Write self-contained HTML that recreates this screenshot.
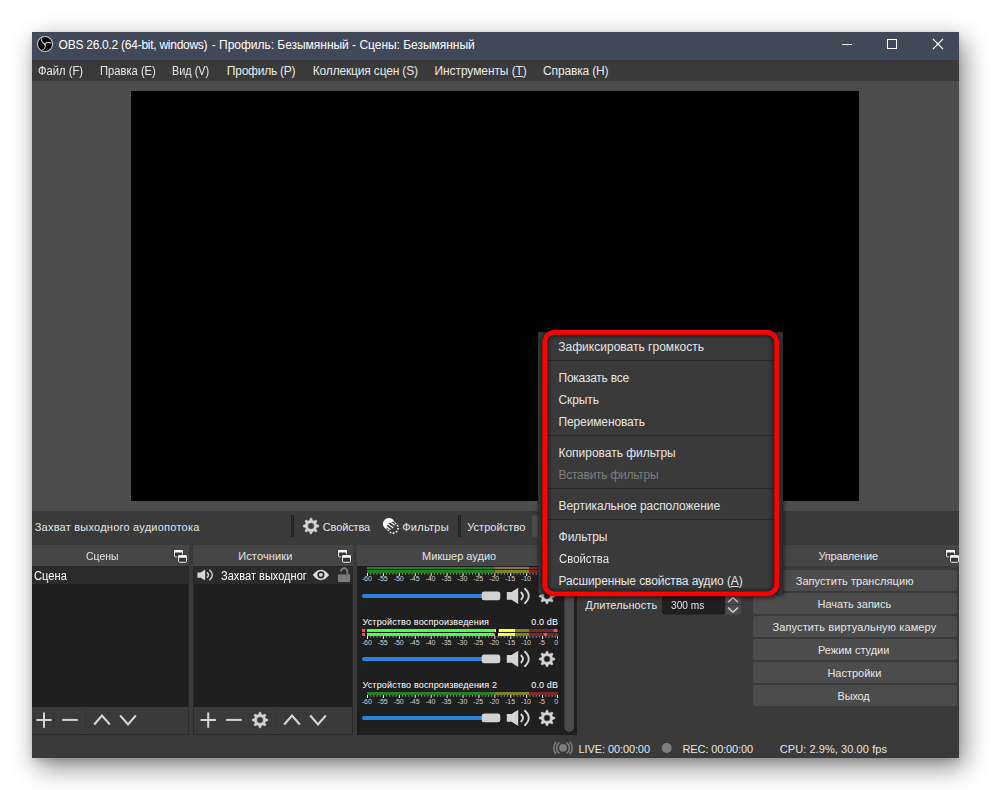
<!DOCTYPE html>
<html lang="ru"><head><meta charset="utf-8"><title>OBS</title>
<style>
html,body{margin:0;padding:0;background:#fff;}
body{width:991px;height:790px;position:relative;overflow:hidden;font-family:"Liberation Sans",sans-serif;}
.abs,.t,#win div,#win svg{position:absolute;}
.t{white-space:nowrap;line-height:normal;z-index:50;transform-origin:0 0;display:block;}
#win{position:absolute;left:32px;top:32px;width:927px;height:726px;background:#3a3a3a;box-shadow:5px 9px 24px rgba(0,0,0,.47),0 3px 6px rgba(0,0,0,.12);}
/* coordinates inside #win are page coords minus 32 */
#titlebar{left:0;top:0;width:927px;height:28px;background:#414858;}
#menubar{left:0;top:28px;width:927px;height:21px;background:#3a3a3a;}
#central{left:0;top:49px;width:927px;height:430px;background:#4c4c4c;}
#preview{left:99px;top:59px;width:728px;height:410px;background:#000;}
.dtitle{background:#464646;height:21px;top:513px;}
.list{background:#1f1f1f;top:535px;height:140px;}
.row{background:#2b2b2b;height:17px;left:0;top:0;}
.tbar{background:#3a3a3a;top:675px;height:28px;border-bottom:1px solid #2c2c2c;border-right:1px solid #2c2c2c;box-sizing:border-box;}
.btn{background:#4c4c4c;border-radius:3px;left:721px;width:204px;height:21px;}
#menu{left:538px;top:332px;width:245px;height:262px;background:#3a3a3a;z-index:60;box-shadow:1px 1px 4px rgba(0,0,0,.55);border:1px solid #303030;box-sizing:border-box;}
#menu .sep{position:absolute;left:5px;width:231px;height:1px;background:#2a2a2a;}
#hl{left:0;top:0;z-index:65;pointer-events:none;}
.lb{top:534px;height:141px;background:#262626;}

</style></head>
<body>
<div id="win">
  <div id="titlebar"></div>
  <div id="menubar"></div>
  <div id="central"></div>
  <div id="preview"></div>

  <!-- docks -->
  <div class="dtitle" style="left:0;width:157px"></div>
  <div class="lb" style="left:0;width:157px"></div>
  <div class="list" style="left:0;width:156px"><div class="row" style="width:156px"></div></div>
  <div class="tbar" style="left:0;width:157px"></div>

  <div class="dtitle" style="left:161px;width:160px"></div>
  <div class="lb" style="left:161px;width:160px"></div>
  <div class="list" style="left:162px;width:158px"><div class="row" style="width:158px"></div></div>
  <div class="tbar" style="left:161px;width:160px;border-left:1px solid #2c2c2c"></div>

  <div class="dtitle" style="left:325px;width:220px"></div>
  <div id="mixer" style="left:325px;top:534px;width:220px;height:169px;background:#1f1f1f"></div>

  <div class="dtitle" style="left:549px;width:168px"></div>
  <div class="dtitle" style="left:721px;width:206px"></div>

  <div class="btn" style="top:538px"></div>
  <div class="btn" style="top:561px"></div>
  <div class="btn" style="top:584px"></div>
  <div class="btn" style="top:607px"></div>
  <div class="btn" style="top:630px"></div>
  <div class="btn" style="top:653px"></div>
</div>
<span id="t0" class="t" style="left:58.60px;top:37.94px;font-size:12px;color:#ffffff;letter-spacing:-0.262px;">OBS 26.0.2 (64-bit, windows)</span>
<span id="t1" class="t" style="left:211.80px;top:37.94px;font-size:12px;color:#ffffff;letter-spacing:-0.026px;">- Профиль: Безымянный - Сцены: Безымянный</span>
<span id="t2" class="t" style="left:37.60px;top:63.94px;font-size:12px;color:#e8e8e8;transform:scaleX(0.9342);">Файл (F)</span>
<span id="t3" class="t" style="left:99.60px;top:63.94px;font-size:12px;color:#e8e8e8;transform:scaleX(0.9319);">Правка (E)</span>
<span id="t4" class="t" style="left:172.30px;top:63.94px;font-size:12px;color:#e8e8e8;transform:scaleX(0.9038);">Вид (V)</span>
<span id="t5" class="t" style="left:226.80px;top:63.94px;font-size:12px;color:#e8e8e8;letter-spacing:-0.234px;">Профиль (P)</span>
<span id="t6" class="t" style="left:312.80px;top:63.94px;font-size:12px;color:#e8e8e8;letter-spacing:-0.171px;">Коллекция сцен (S)</span>
<span id="t7" class="t" style="left:434.50px;top:63.94px;font-size:12px;color:#e8e8e8;letter-spacing:-0.086px;">Инструменты (<u>T</u>)</span>
<span id="t8" class="t" style="left:543.10px;top:63.94px;font-size:12px;color:#e8e8e8;letter-spacing:-0.158px;">Справка (H)</span>
<span id="t9" class="t" style="left:34.70px;top:521.25px;font-size:11px;color:#e4e4e4;letter-spacing:0.231px;">Захват выходного аудиопотока</span>
<span id="t10" class="t" style="left:322.80px;top:521.14px;font-size:11px;color:#e4e4e4;letter-spacing:-0.145px;">Свойства</span>
<span id="t11" class="t" style="left:402.20px;top:521.14px;font-size:11px;color:#e4e4e4;letter-spacing:0.257px;">Фильтры</span>
<span id="t12" class="t" style="left:467.20px;top:521.14px;font-size:11px;color:#e4e4e4;letter-spacing:0.061px;">Устройство</span>
<span id="t13" class="t" style="left:85.60px;top:549.75px;font-size:11px;color:#e4e4e4;transform:scaleX(0.9493);">Сцены</span>
<span id="t14" class="t" style="left:238.20px;top:549.75px;font-size:11px;color:#e4e4e4;letter-spacing:0.124px;">Источники</span>
<span id="t15" class="t" style="left:422.10px;top:549.75px;font-size:11px;color:#e4e4e4;letter-spacing:0.005px;">Микшер аудио</span>
<span id="t16" class="t" style="left:818.50px;top:549.75px;font-size:11px;color:#e4e4e4;letter-spacing:-0.184px;">Управление</span>
<span id="t17" class="t" style="left:33.60px;top:568.64px;font-size:12px;color:#ffffff;transform:scaleX(0.9296);">Сцена</span>
<span id="t18" class="t" style="left:221.00px;top:568.64px;font-size:12px;color:#ffffff;transform:scaleX(0.9190);">Захват выходног</span>
<span id="t19" class="t" style="left:362.40px;top:616.65px;font-size:9px;color:#ffffff;letter-spacing:0.167px;">Устройство воспроизведения</span>
<span id="t20" class="t" style="left:531.30px;top:616.65px;font-size:9px;color:#ffffff;letter-spacing:0.134px;">0.0 dB</span>
<span id="t21" class="t" style="left:362.40px;top:679.65px;font-size:9px;color:#ffffff;letter-spacing:0.173px;">Устройство воспроизведения 2</span>
<span id="t22" class="t" style="left:531.30px;top:679.65px;font-size:9px;color:#ffffff;letter-spacing:0.134px;">0.0 dB</span>
<span id="t23" class="t" style="left:585.20px;top:599.34px;font-size:11px;color:#e4e4e4;letter-spacing:0.064px;">Длительность</span>
<span id="t24" class="t" style="left:671.10px;top:598.84px;font-size:11px;color:#e4e4e4;transform:scaleX(0.9230);">300 ms</span>
<span id="t25" class="t" style="left:795.70px;top:574.84px;font-size:11px;color:#e4e4e4;letter-spacing:0.062px;">Запустить трансляцию</span>
<span id="t26" class="t" style="left:817.50px;top:597.84px;font-size:11px;color:#e4e4e4;letter-spacing:-0.004px;">Начать запись</span>
<span id="t27" class="t" style="left:772.50px;top:620.84px;font-size:11px;color:#e4e4e4;letter-spacing:0.119px;">Запустить виртуальную камеру</span>
<span id="t28" class="t" style="left:818.00px;top:643.84px;font-size:11px;color:#e4e4e4;letter-spacing:-0.008px;">Режим студии</span>
<span id="t29" class="t" style="left:827.40px;top:666.84px;font-size:11px;color:#e4e4e4;letter-spacing:-0.005px;">Настройки</span>
<span id="t30" class="t" style="left:837.50px;top:689.84px;font-size:11px;color:#e4e4e4;letter-spacing:-0.180px;">Выход</span>
<span id="t31" class="t" style="left:578.60px;top:742.64px;font-size:11px;color:#e4e4e4;letter-spacing:-0.106px;">LIVE: 00:00:00</span>
<span id="t32" class="t" style="left:682.40px;top:742.64px;font-size:11px;color:#e4e4e4;letter-spacing:-0.113px;">REC: 00:00:00</span>
<span id="t33" class="t" style="left:779.70px;top:742.64px;font-size:11px;color:#e4e4e4;letter-spacing:0.080px;">CPU: 2.9%, 30.00 fps</span>
<span id="t34" class="t" style="left:558.30px;top:340.14px;font-size:12px;color:#e4e4e4;letter-spacing:0.011px;z-index:70;">Зафиксировать громкость</span>
<span id="t35" class="t" style="left:558.50px;top:371.14px;font-size:12px;color:#e4e4e4;letter-spacing:-0.242px;z-index:70;">Показать все</span>
<span id="t36" class="t" style="left:558.50px;top:393.14px;font-size:12px;color:#e4e4e4;letter-spacing:-0.094px;z-index:70;">Скрыть</span>
<span id="t37" class="t" style="left:558.50px;top:415.14px;font-size:12px;color:#e4e4e4;letter-spacing:-0.124px;z-index:70;">Переименовать</span>
<span id="t38" class="t" style="left:558.50px;top:446.14px;font-size:12px;color:#e4e4e4;letter-spacing:-0.026px;z-index:70;">Копировать фильтры</span>
<span id="t39" class="t" style="left:558.50px;top:468.14px;font-size:12px;color:#7e7e7e;letter-spacing:-0.253px;z-index:70;">Вставить фильтры</span>
<span id="t40" class="t" style="left:558.50px;top:499.14px;font-size:12px;color:#e4e4e4;letter-spacing:-0.045px;z-index:70;">Вертикальное расположение</span>
<span id="t41" class="t" style="left:558.50px;top:530.14px;font-size:12px;color:#e4e4e4;letter-spacing:0.010px;z-index:70;">Фильтры</span>
<span id="t42" class="t" style="left:558.50px;top:552.14px;font-size:12px;color:#e4e4e4;transform:scaleX(0.9487);z-index:70;">Свойства</span>
<span id="t43" class="t" style="left:558.50px;top:574.14px;font-size:12px;color:#e4e4e4;letter-spacing:-0.099px;z-index:70;">Расширенные свойства аудио (<u>A</u>)</span>
<svg id="ic" width="991" height="790" viewBox="0 0 991 790" style="position:absolute;left:0;top:0;z-index:40">
<style>.sc{font-family:"Liberation Sans",sans-serif;font-size:7px;fill:#d0d0d0;letter-spacing:-0.1px}</style>
<circle cx="45" cy="44" r="7.55" fill="#000" stroke="#cfcfcf" stroke-width="1.05"/>
<path d="M41.3 39.3 Q41.4 42.3 44.9 44.3 M45.1 44.4 Q46.8 40.9 51.0 43.3 M45.0 44.5 Q46.1 48.2 42.6 49.9" stroke="#c4c4c4" stroke-width="1.05" fill="none" stroke-linecap="round"/>
<circle cx="45" cy="44.3" r="0.9" fill="#d8d8d8"/>
<path d="M842 44.5 h10" stroke="#fff" stroke-width="1"/>
<rect x="887.5" y="39.5" width="9" height="9" fill="none" stroke="#fff" stroke-width="1"/>
<path d="M933 39 l10 10 M943 39 l-10 10" stroke="#fff" stroke-width="1.1"/>
<rect x="291.5" y="515.5" width="2" height="21" fill="#303030" stroke="#1f1f1f" stroke-width="1"/>
<rect x="458.5" y="515.5" width="2" height="21" fill="#303030" stroke="#1f1f1f" stroke-width="1"/>
<path d="M309.52 520.49 L310.31 518.13 L311.69 518.13 L312.48 520.49 L313.85 521.06 L316.08 519.95 L317.05 520.92 L315.94 523.15 L316.51 524.52 L318.87 525.31 L318.87 526.69 L316.51 527.48 L315.94 528.85 L317.05 531.08 L316.08 532.05 L313.85 530.94 L312.48 531.51 L311.69 533.87 L310.31 533.87 L309.52 531.51 L308.15 530.94 L305.92 532.05 L304.95 531.08 L306.06 528.85 L305.49 527.48 L303.13 526.69 L303.13 525.31 L305.49 524.52 L306.06 523.15 L304.95 520.92 L305.92 519.95 L308.15 521.06 Z M307.70 526.00 a3.30 3.30 0 1 0 6.60 0 a3.30 3.30 0 1 0 -6.60 0 Z" fill="#d4d4d4" fill-rule="evenodd" stroke="#d4d4d4" stroke-width="0.5" stroke-linejoin="round"/>
<defs><clipPath id="fc"><circle cx="388.8" cy="523.8" r="5.9"/></clipPath></defs>
<circle cx="392.9" cy="527.9" r="5.2" fill="none" stroke="#fff" stroke-width="1.6" stroke-dasharray="1.7 1.5"/>
<circle cx="388.8" cy="523.8" r="5.9" fill="#fff"/>
<g clip-path="url(#fc)"><circle cx="392.9" cy="527.9" r="6.2" fill="#3a3a3a"/><path d="M385 525.5 l8 6 M386.6 523 l8 6 M388.4 520.6 l8 6 M390.2 518.2 l8 6" stroke="#fff" stroke-width="1.1"/></g>
<rect x="532" y="515" width="60" height="22" rx="3" fill="#4c4c4c"/>
<rect x="174.00" y="549.90" width="9" height="7.5" fill="#343434" stroke="#383838" stroke-width="1.8" rx="1"/><rect x="174.50" y="550.40" width="8" height="6.5" fill="#363636" stroke="#ededed" stroke-width="1" rx="0.8"/><rect x="174.00" y="549.90" width="9" height="2.5" fill="#f6f6f6" rx="0.9"/><rect x="178.00" y="555.30" width="9" height="7.5" fill="#343434" stroke="#383838" stroke-width="1.8" rx="1"/><rect x="178.50" y="555.80" width="8" height="6.5" fill="#363636" stroke="#ededed" stroke-width="1" rx="0.8"/><rect x="178.00" y="555.30" width="9" height="2.5" fill="#f6f6f6" rx="0.9"/>
<rect x="338.00" y="549.90" width="9" height="7.5" fill="#343434" stroke="#383838" stroke-width="1.8" rx="1"/><rect x="338.50" y="550.40" width="8" height="6.5" fill="#363636" stroke="#ededed" stroke-width="1" rx="0.8"/><rect x="338.00" y="549.90" width="9" height="2.5" fill="#f6f6f6" rx="0.9"/><rect x="342.00" y="555.30" width="9" height="7.5" fill="#343434" stroke="#383838" stroke-width="1.8" rx="1"/><rect x="342.50" y="555.80" width="8" height="6.5" fill="#363636" stroke="#ededed" stroke-width="1" rx="0.8"/><rect x="342.00" y="555.30" width="9" height="2.5" fill="#f6f6f6" rx="0.9"/>
<defs><clipPath id="wc"><rect x="32" y="32" width="927" height="726"/></clipPath></defs><g clip-path="url(#wc)"><rect x="946.00" y="549.90" width="9" height="7.5" fill="#343434" stroke="#383838" stroke-width="1.8" rx="1"/><rect x="946.50" y="550.40" width="8" height="6.5" fill="#363636" stroke="#ededed" stroke-width="1" rx="0.8"/><rect x="946.00" y="549.90" width="9" height="2.5" fill="#f6f6f6" rx="0.9"/><rect x="950.00" y="555.30" width="9" height="7.5" fill="#343434" stroke="#383838" stroke-width="1.8" rx="1"/><rect x="950.50" y="555.80" width="8" height="6.5" fill="#363636" stroke="#ededed" stroke-width="1" rx="0.8"/><rect x="950.00" y="555.30" width="9" height="2.5" fill="#f6f6f6" rx="0.9"/></g>
<path d="M36.30 720.10 h15.40 M44.00 712.40 v15.40" stroke="#d4d4d4" stroke-width="2" fill="none"/>
<path d="M62.10 719.90 h15.60" stroke="#d4d4d4" stroke-width="2" fill="none"/>
<path d="M85.5 711 v18.5" stroke="#333" stroke-width="1"/>
<path d="M94.20 724.40 L102.00 715.60 L109.80 724.40" stroke="#d4d4d4" stroke-width="2.2" fill="none"/>
<path d="M120.20 715.60 L128.00 724.40 L135.80 715.60" stroke="#d4d4d4" stroke-width="2.2" fill="none"/>
<path d="M200.50 720.10 h15.40 M208.20 712.40 v15.40" stroke="#d4d4d4" stroke-width="2" fill="none"/>
<path d="M226.20 719.90 h15.60" stroke="#d4d4d4" stroke-width="2" fill="none"/>
<path d="M258.52 714.49 L259.31 712.13 L260.69 712.13 L261.48 714.49 L262.85 715.06 L265.08 713.95 L266.05 714.92 L264.94 717.15 L265.51 718.52 L267.87 719.31 L267.87 720.69 L265.51 721.48 L264.94 722.85 L266.05 725.08 L265.08 726.05 L262.85 724.94 L261.48 725.51 L260.69 727.87 L259.31 727.87 L258.52 725.51 L257.15 724.94 L254.92 726.05 L253.95 725.08 L255.06 722.85 L254.49 721.48 L252.13 720.69 L252.13 719.31 L254.49 718.52 L255.06 717.15 L253.95 714.92 L254.92 713.95 L257.15 715.06 Z M256.70 720.00 a3.30 3.30 0 1 0 6.60 0 a3.30 3.30 0 1 0 -6.60 0 Z" fill="#d4d4d4" fill-rule="evenodd" stroke="#d4d4d4" stroke-width="0.5" stroke-linejoin="round"/>
<path d="M275.5 711 v18.5" stroke="#333" stroke-width="1"/>
<path d="M284.20 724.40 L292.00 715.60 L299.80 724.40" stroke="#d4d4d4" stroke-width="2.2" fill="none"/>
<path d="M310.20 715.60 L318.00 724.40 L325.80 715.60" stroke="#d4d4d4" stroke-width="2.2" fill="none"/>
<path d="M197.40 572.42 L200.60 572.42 L205.15 569.50 L205.15 580.58 L200.60 577.66 L197.40 577.66 Z" fill="#d4d4d4"/><path d="M206.92 572.36 Q209.91 575.04 206.92 577.80" stroke="#d4d4d4" stroke-width="1.40" fill="none"/><path d="M209.37 569.84 Q215.22 575.04 209.37 580.31" stroke="#d4d4d4" stroke-width="1.40" fill="none"/>
<path d="M312.8 575 Q320.9 564.6 329.1 575 Q320.9 585.4 312.8 575 Z" fill="#dcdcdc"/>
<circle cx="320.9" cy="574.8" r="3.6" fill="#2b2b2b"/><circle cx="320.9" cy="574.8" r="1.9" fill="#dcdcdc"/>
<rect x="338" y="574.4" width="12" height="7.6" fill="#7c7c7c"/>
<path d="M341 571.6 v-0.2 a3.2 3.2 0 0 1 6.4 0 v3.4" stroke="#7c7c7c" stroke-width="1.9" fill="none"/>
<g clip-path="url(#mx)">
<defs><clipPath id="mx"><rect x="357" y="567" width="220" height="168"/></clipPath></defs>
<rect x="367" y="566" width="127.33" height="3" fill="#267f26"/><rect x="494.33" y="566" width="35.02" height="3" fill="#7f7f26"/><rect x="529.35" y="566" width="28.65" height="3" fill="#7f2626"/><rect x="367" y="570" width="127.33" height="3" fill="#267f26"/><rect x="494.33" y="570" width="35.02" height="3" fill="#7f7f26"/><rect x="529.35" y="570" width="28.65" height="3" fill="#7f2626"/><rect x="367.00" y="573" width="1" height="3" fill="#f0f0f0"/><rect x="370.18" y="573" width="1" height="1.8" fill="#8c8c8c"/><rect x="373.37" y="573" width="1" height="1.8" fill="#8c8c8c"/><rect x="376.55" y="573" width="1" height="1.8" fill="#8c8c8c"/><rect x="379.73" y="573" width="1" height="1.8" fill="#8c8c8c"/><rect x="382.92" y="573" width="1" height="3" fill="#f0f0f0"/><rect x="386.10" y="573" width="1" height="1.8" fill="#8c8c8c"/><rect x="389.28" y="573" width="1" height="1.8" fill="#8c8c8c"/><rect x="392.47" y="573" width="1" height="1.8" fill="#8c8c8c"/><rect x="395.65" y="573" width="1" height="1.8" fill="#8c8c8c"/><rect x="398.83" y="573" width="1" height="3" fill="#f0f0f0"/><rect x="402.02" y="573" width="1" height="1.8" fill="#8c8c8c"/><rect x="405.20" y="573" width="1" height="1.8" fill="#8c8c8c"/><rect x="408.38" y="573" width="1" height="1.8" fill="#8c8c8c"/><rect x="411.57" y="573" width="1" height="1.8" fill="#8c8c8c"/><rect x="414.75" y="573" width="1" height="3" fill="#f0f0f0"/><rect x="417.93" y="573" width="1" height="1.8" fill="#8c8c8c"/><rect x="421.12" y="573" width="1" height="1.8" fill="#8c8c8c"/><rect x="424.30" y="573" width="1" height="1.8" fill="#8c8c8c"/><rect x="427.48" y="573" width="1" height="1.8" fill="#8c8c8c"/><rect x="430.67" y="573" width="1" height="3" fill="#f0f0f0"/><rect x="433.85" y="573" width="1" height="1.8" fill="#8c8c8c"/><rect x="437.03" y="573" width="1" height="1.8" fill="#8c8c8c"/><rect x="440.22" y="573" width="1" height="1.8" fill="#8c8c8c"/><rect x="443.40" y="573" width="1" height="1.8" fill="#8c8c8c"/><rect x="446.58" y="573" width="1" height="3" fill="#f0f0f0"/><rect x="449.77" y="573" width="1" height="1.8" fill="#8c8c8c"/><rect x="452.95" y="573" width="1" height="1.8" fill="#8c8c8c"/><rect x="456.13" y="573" width="1" height="1.8" fill="#8c8c8c"/><rect x="459.32" y="573" width="1" height="1.8" fill="#8c8c8c"/><rect x="462.50" y="573" width="1" height="3" fill="#f0f0f0"/><rect x="465.68" y="573" width="1" height="1.8" fill="#8c8c8c"/><rect x="468.87" y="573" width="1" height="1.8" fill="#8c8c8c"/><rect x="472.05" y="573" width="1" height="1.8" fill="#8c8c8c"/><rect x="475.23" y="573" width="1" height="1.8" fill="#8c8c8c"/><rect x="478.42" y="573" width="1" height="3" fill="#f0f0f0"/><rect x="481.60" y="573" width="1" height="1.8" fill="#8c8c8c"/><rect x="484.78" y="573" width="1" height="1.8" fill="#8c8c8c"/><rect x="487.97" y="573" width="1" height="1.8" fill="#8c8c8c"/><rect x="491.15" y="573" width="1" height="1.8" fill="#8c8c8c"/><rect x="494.33" y="573" width="1" height="3" fill="#f0f0f0"/><rect x="497.52" y="573" width="1" height="1.8" fill="#8c8c8c"/><rect x="500.70" y="573" width="1" height="1.8" fill="#8c8c8c"/><rect x="503.88" y="573" width="1" height="1.8" fill="#8c8c8c"/><rect x="507.07" y="573" width="1" height="1.8" fill="#8c8c8c"/><rect x="510.25" y="573" width="1" height="3" fill="#f0f0f0"/><rect x="513.43" y="573" width="1" height="1.8" fill="#8c8c8c"/><rect x="516.62" y="573" width="1" height="1.8" fill="#8c8c8c"/><rect x="519.80" y="573" width="1" height="1.8" fill="#8c8c8c"/><rect x="522.98" y="573" width="1" height="1.8" fill="#8c8c8c"/><rect x="526.17" y="573" width="1" height="3" fill="#f0f0f0"/><rect x="529.35" y="573" width="1" height="1.8" fill="#8c8c8c"/><rect x="532.53" y="573" width="1" height="1.8" fill="#8c8c8c"/><rect x="535.72" y="573" width="1" height="1.8" fill="#8c8c8c"/><rect x="538.90" y="573" width="1" height="1.8" fill="#8c8c8c"/><rect x="542.08" y="573" width="1" height="3" fill="#f0f0f0"/><rect x="545.27" y="573" width="1" height="1.8" fill="#8c8c8c"/><rect x="548.45" y="573" width="1" height="1.8" fill="#8c8c8c"/><rect x="551.63" y="573" width="1" height="1.8" fill="#8c8c8c"/><rect x="554.82" y="573" width="1" height="1.8" fill="#8c8c8c"/><rect x="557.00" y="573" width="1" height="3" fill="#f0f0f0"/><text x="366.80" y="580.7" text-anchor="middle" class="sc">-60</text><text x="382.72" y="580.7" text-anchor="middle" class="sc">-55</text><text x="398.63" y="580.7" text-anchor="middle" class="sc">-50</text><text x="414.55" y="580.7" text-anchor="middle" class="sc">-45</text><text x="430.47" y="580.7" text-anchor="middle" class="sc">-40</text><text x="446.38" y="580.7" text-anchor="middle" class="sc">-35</text><text x="462.30" y="580.7" text-anchor="middle" class="sc">-30</text><text x="478.22" y="580.7" text-anchor="middle" class="sc">-25</text><text x="494.13" y="580.7" text-anchor="middle" class="sc">-20</text><text x="510.05" y="580.7" text-anchor="middle" class="sc">-15</text><text x="525.97" y="580.7" text-anchor="middle" class="sc">-10</text><text x="541.88" y="580.7" text-anchor="middle" class="sc">-5</text><text x="558" y="580.7" text-anchor="end" class="sc">0</text><rect x="362" y="594" width="124" height="4" rx="2" fill="#2a82da"/><rect x="481.7" y="591.6" width="18.6" height="8.6" rx="2.5" fill="#d2d2d2"/><path d="M506.80 592.10 L511.50 592.10 L518.20 587.80 L518.20 604.10 L511.50 599.80 L506.80 599.80 Z" fill="#d4d4d4"/><path d="M520.80 592.00 Q525.20 595.95 520.80 600.00" stroke="#d4d4d4" stroke-width="1.95" fill="none"/><path d="M524.40 588.30 Q533.00 595.95 524.40 603.70" stroke="#d4d4d4" stroke-width="1.95" fill="none"/><path d="M545.52 590.49 L546.31 588.13 L547.69 588.13 L548.48 590.49 L549.85 591.06 L552.08 589.95 L553.05 590.92 L551.94 593.15 L552.51 594.52 L554.87 595.31 L554.87 596.69 L552.51 597.48 L551.94 598.85 L553.05 601.08 L552.08 602.05 L549.85 600.94 L548.48 601.51 L547.69 603.87 L546.31 603.87 L545.52 601.51 L544.15 600.94 L541.92 602.05 L540.95 601.08 L542.06 598.85 L541.49 597.48 L539.13 596.69 L539.13 595.31 L541.49 594.52 L542.06 593.15 L540.95 590.92 L541.92 589.95 L544.15 591.06 Z M543.70 596.00 a3.30 3.30 0 1 0 6.60 0 a3.30 3.30 0 1 0 -6.60 0 Z" fill="#d4d4d4" fill-rule="evenodd" stroke="#d4d4d4" stroke-width="0.5" stroke-linejoin="round"/>
<rect x="362" y="629" width="3" height="3" fill="#ff4c4c"/><rect x="367" y="629" width="127.33" height="3" fill="#4cff4c"/><rect x="494.33" y="629" width="20.67" height="3" fill="#ffff4c"/><rect x="515" y="629" width="14.35" height="3" fill="#7f7f26"/><rect x="529.35" y="629" width="28.65" height="3" fill="#7f2626"/><rect x="496" y="629" width="2.7" height="3" fill="#000"/><rect x="553.6" y="629" width="3.6" height="3" fill="#ff4c4c"/><rect x="362" y="633" width="3" height="3" fill="#ff4c4c"/><rect x="367" y="633" width="127.33" height="3" fill="#4cff4c"/><rect x="494.33" y="633" width="20.67" height="3" fill="#ffff4c"/><rect x="515" y="633" width="14.35" height="3" fill="#7f7f26"/><rect x="529.35" y="633" width="28.65" height="3" fill="#7f2626"/><rect x="494.8" y="633" width="3" height="3" fill="#000"/><rect x="543.8" y="633" width="3.2" height="3" fill="#ff4c4c"/><rect x="367.00" y="636" width="1" height="3" fill="#f0f0f0"/><rect x="370.18" y="636" width="1" height="1.8" fill="#8c8c8c"/><rect x="373.37" y="636" width="1" height="1.8" fill="#8c8c8c"/><rect x="376.55" y="636" width="1" height="1.8" fill="#8c8c8c"/><rect x="379.73" y="636" width="1" height="1.8" fill="#8c8c8c"/><rect x="382.92" y="636" width="1" height="3" fill="#f0f0f0"/><rect x="386.10" y="636" width="1" height="1.8" fill="#8c8c8c"/><rect x="389.28" y="636" width="1" height="1.8" fill="#8c8c8c"/><rect x="392.47" y="636" width="1" height="1.8" fill="#8c8c8c"/><rect x="395.65" y="636" width="1" height="1.8" fill="#8c8c8c"/><rect x="398.83" y="636" width="1" height="3" fill="#f0f0f0"/><rect x="402.02" y="636" width="1" height="1.8" fill="#8c8c8c"/><rect x="405.20" y="636" width="1" height="1.8" fill="#8c8c8c"/><rect x="408.38" y="636" width="1" height="1.8" fill="#8c8c8c"/><rect x="411.57" y="636" width="1" height="1.8" fill="#8c8c8c"/><rect x="414.75" y="636" width="1" height="3" fill="#f0f0f0"/><rect x="417.93" y="636" width="1" height="1.8" fill="#8c8c8c"/><rect x="421.12" y="636" width="1" height="1.8" fill="#8c8c8c"/><rect x="424.30" y="636" width="1" height="1.8" fill="#8c8c8c"/><rect x="427.48" y="636" width="1" height="1.8" fill="#8c8c8c"/><rect x="430.67" y="636" width="1" height="3" fill="#f0f0f0"/><rect x="433.85" y="636" width="1" height="1.8" fill="#8c8c8c"/><rect x="437.03" y="636" width="1" height="1.8" fill="#8c8c8c"/><rect x="440.22" y="636" width="1" height="1.8" fill="#8c8c8c"/><rect x="443.40" y="636" width="1" height="1.8" fill="#8c8c8c"/><rect x="446.58" y="636" width="1" height="3" fill="#f0f0f0"/><rect x="449.77" y="636" width="1" height="1.8" fill="#8c8c8c"/><rect x="452.95" y="636" width="1" height="1.8" fill="#8c8c8c"/><rect x="456.13" y="636" width="1" height="1.8" fill="#8c8c8c"/><rect x="459.32" y="636" width="1" height="1.8" fill="#8c8c8c"/><rect x="462.50" y="636" width="1" height="3" fill="#f0f0f0"/><rect x="465.68" y="636" width="1" height="1.8" fill="#8c8c8c"/><rect x="468.87" y="636" width="1" height="1.8" fill="#8c8c8c"/><rect x="472.05" y="636" width="1" height="1.8" fill="#8c8c8c"/><rect x="475.23" y="636" width="1" height="1.8" fill="#8c8c8c"/><rect x="478.42" y="636" width="1" height="3" fill="#f0f0f0"/><rect x="481.60" y="636" width="1" height="1.8" fill="#8c8c8c"/><rect x="484.78" y="636" width="1" height="1.8" fill="#8c8c8c"/><rect x="487.97" y="636" width="1" height="1.8" fill="#8c8c8c"/><rect x="491.15" y="636" width="1" height="1.8" fill="#8c8c8c"/><rect x="494.33" y="636" width="1" height="3" fill="#f0f0f0"/><rect x="497.52" y="636" width="1" height="1.8" fill="#8c8c8c"/><rect x="500.70" y="636" width="1" height="1.8" fill="#8c8c8c"/><rect x="503.88" y="636" width="1" height="1.8" fill="#8c8c8c"/><rect x="507.07" y="636" width="1" height="1.8" fill="#8c8c8c"/><rect x="510.25" y="636" width="1" height="3" fill="#f0f0f0"/><rect x="513.43" y="636" width="1" height="1.8" fill="#8c8c8c"/><rect x="516.62" y="636" width="1" height="1.8" fill="#8c8c8c"/><rect x="519.80" y="636" width="1" height="1.8" fill="#8c8c8c"/><rect x="522.98" y="636" width="1" height="1.8" fill="#8c8c8c"/><rect x="526.17" y="636" width="1" height="3" fill="#f0f0f0"/><rect x="529.35" y="636" width="1" height="1.8" fill="#8c8c8c"/><rect x="532.53" y="636" width="1" height="1.8" fill="#8c8c8c"/><rect x="535.72" y="636" width="1" height="1.8" fill="#8c8c8c"/><rect x="538.90" y="636" width="1" height="1.8" fill="#8c8c8c"/><rect x="542.08" y="636" width="1" height="3" fill="#f0f0f0"/><rect x="545.27" y="636" width="1" height="1.8" fill="#8c8c8c"/><rect x="548.45" y="636" width="1" height="1.8" fill="#8c8c8c"/><rect x="551.63" y="636" width="1" height="1.8" fill="#8c8c8c"/><rect x="554.82" y="636" width="1" height="1.8" fill="#8c8c8c"/><rect x="557.00" y="636" width="1" height="3" fill="#f0f0f0"/><text x="366.80" y="644.6" text-anchor="middle" class="sc">-60</text><text x="382.72" y="644.6" text-anchor="middle" class="sc">-55</text><text x="398.63" y="644.6" text-anchor="middle" class="sc">-50</text><text x="414.55" y="644.6" text-anchor="middle" class="sc">-45</text><text x="430.47" y="644.6" text-anchor="middle" class="sc">-40</text><text x="446.38" y="644.6" text-anchor="middle" class="sc">-35</text><text x="462.30" y="644.6" text-anchor="middle" class="sc">-30</text><text x="478.22" y="644.6" text-anchor="middle" class="sc">-25</text><text x="494.13" y="644.6" text-anchor="middle" class="sc">-20</text><text x="510.05" y="644.6" text-anchor="middle" class="sc">-15</text><text x="525.97" y="644.6" text-anchor="middle" class="sc">-10</text><text x="541.88" y="644.6" text-anchor="middle" class="sc">-5</text><text x="558" y="644.6" text-anchor="end" class="sc">0</text><rect x="362" y="657" width="124" height="4" rx="2" fill="#2a82da"/><rect x="481.7" y="654.6" width="18.6" height="8.6" rx="2.5" fill="#d2d2d2"/><path d="M506.80 655.10 L511.50 655.10 L518.20 650.80 L518.20 667.10 L511.50 662.80 L506.80 662.80 Z" fill="#d4d4d4"/><path d="M520.80 655.00 Q525.20 658.95 520.80 663.00" stroke="#d4d4d4" stroke-width="1.95" fill="none"/><path d="M524.40 651.30 Q533.00 658.95 524.40 666.70" stroke="#d4d4d4" stroke-width="1.95" fill="none"/><path d="M545.52 653.49 L546.31 651.13 L547.69 651.13 L548.48 653.49 L549.85 654.06 L552.08 652.95 L553.05 653.92 L551.94 656.15 L552.51 657.52 L554.87 658.31 L554.87 659.69 L552.51 660.48 L551.94 661.85 L553.05 664.08 L552.08 665.05 L549.85 663.94 L548.48 664.51 L547.69 666.87 L546.31 666.87 L545.52 664.51 L544.15 663.94 L541.92 665.05 L540.95 664.08 L542.06 661.85 L541.49 660.48 L539.13 659.69 L539.13 658.31 L541.49 657.52 L542.06 656.15 L540.95 653.92 L541.92 652.95 L544.15 654.06 Z M543.70 659.00 a3.30 3.30 0 1 0 6.60 0 a3.30 3.30 0 1 0 -6.60 0 Z" fill="#d4d4d4" fill-rule="evenodd" stroke="#d4d4d4" stroke-width="0.5" stroke-linejoin="round"/>
<rect x="367" y="692" width="127.33" height="3" fill="#267f26"/><rect x="494.33" y="692" width="35.02" height="3" fill="#7f7f26"/><rect x="529.35" y="692" width="28.65" height="3" fill="#7f2626"/><rect x="367.00" y="695" width="1" height="3" fill="#f0f0f0"/><rect x="370.18" y="695" width="1" height="1.8" fill="#8c8c8c"/><rect x="373.37" y="695" width="1" height="1.8" fill="#8c8c8c"/><rect x="376.55" y="695" width="1" height="1.8" fill="#8c8c8c"/><rect x="379.73" y="695" width="1" height="1.8" fill="#8c8c8c"/><rect x="382.92" y="695" width="1" height="3" fill="#f0f0f0"/><rect x="386.10" y="695" width="1" height="1.8" fill="#8c8c8c"/><rect x="389.28" y="695" width="1" height="1.8" fill="#8c8c8c"/><rect x="392.47" y="695" width="1" height="1.8" fill="#8c8c8c"/><rect x="395.65" y="695" width="1" height="1.8" fill="#8c8c8c"/><rect x="398.83" y="695" width="1" height="3" fill="#f0f0f0"/><rect x="402.02" y="695" width="1" height="1.8" fill="#8c8c8c"/><rect x="405.20" y="695" width="1" height="1.8" fill="#8c8c8c"/><rect x="408.38" y="695" width="1" height="1.8" fill="#8c8c8c"/><rect x="411.57" y="695" width="1" height="1.8" fill="#8c8c8c"/><rect x="414.75" y="695" width="1" height="3" fill="#f0f0f0"/><rect x="417.93" y="695" width="1" height="1.8" fill="#8c8c8c"/><rect x="421.12" y="695" width="1" height="1.8" fill="#8c8c8c"/><rect x="424.30" y="695" width="1" height="1.8" fill="#8c8c8c"/><rect x="427.48" y="695" width="1" height="1.8" fill="#8c8c8c"/><rect x="430.67" y="695" width="1" height="3" fill="#f0f0f0"/><rect x="433.85" y="695" width="1" height="1.8" fill="#8c8c8c"/><rect x="437.03" y="695" width="1" height="1.8" fill="#8c8c8c"/><rect x="440.22" y="695" width="1" height="1.8" fill="#8c8c8c"/><rect x="443.40" y="695" width="1" height="1.8" fill="#8c8c8c"/><rect x="446.58" y="695" width="1" height="3" fill="#f0f0f0"/><rect x="449.77" y="695" width="1" height="1.8" fill="#8c8c8c"/><rect x="452.95" y="695" width="1" height="1.8" fill="#8c8c8c"/><rect x="456.13" y="695" width="1" height="1.8" fill="#8c8c8c"/><rect x="459.32" y="695" width="1" height="1.8" fill="#8c8c8c"/><rect x="462.50" y="695" width="1" height="3" fill="#f0f0f0"/><rect x="465.68" y="695" width="1" height="1.8" fill="#8c8c8c"/><rect x="468.87" y="695" width="1" height="1.8" fill="#8c8c8c"/><rect x="472.05" y="695" width="1" height="1.8" fill="#8c8c8c"/><rect x="475.23" y="695" width="1" height="1.8" fill="#8c8c8c"/><rect x="478.42" y="695" width="1" height="3" fill="#f0f0f0"/><rect x="481.60" y="695" width="1" height="1.8" fill="#8c8c8c"/><rect x="484.78" y="695" width="1" height="1.8" fill="#8c8c8c"/><rect x="487.97" y="695" width="1" height="1.8" fill="#8c8c8c"/><rect x="491.15" y="695" width="1" height="1.8" fill="#8c8c8c"/><rect x="494.33" y="695" width="1" height="3" fill="#f0f0f0"/><rect x="497.52" y="695" width="1" height="1.8" fill="#8c8c8c"/><rect x="500.70" y="695" width="1" height="1.8" fill="#8c8c8c"/><rect x="503.88" y="695" width="1" height="1.8" fill="#8c8c8c"/><rect x="507.07" y="695" width="1" height="1.8" fill="#8c8c8c"/><rect x="510.25" y="695" width="1" height="3" fill="#f0f0f0"/><rect x="513.43" y="695" width="1" height="1.8" fill="#8c8c8c"/><rect x="516.62" y="695" width="1" height="1.8" fill="#8c8c8c"/><rect x="519.80" y="695" width="1" height="1.8" fill="#8c8c8c"/><rect x="522.98" y="695" width="1" height="1.8" fill="#8c8c8c"/><rect x="526.17" y="695" width="1" height="3" fill="#f0f0f0"/><rect x="529.35" y="695" width="1" height="1.8" fill="#8c8c8c"/><rect x="532.53" y="695" width="1" height="1.8" fill="#8c8c8c"/><rect x="535.72" y="695" width="1" height="1.8" fill="#8c8c8c"/><rect x="538.90" y="695" width="1" height="1.8" fill="#8c8c8c"/><rect x="542.08" y="695" width="1" height="3" fill="#f0f0f0"/><rect x="545.27" y="695" width="1" height="1.8" fill="#8c8c8c"/><rect x="548.45" y="695" width="1" height="1.8" fill="#8c8c8c"/><rect x="551.63" y="695" width="1" height="1.8" fill="#8c8c8c"/><rect x="554.82" y="695" width="1" height="1.8" fill="#8c8c8c"/><rect x="557.00" y="695" width="1" height="3" fill="#f0f0f0"/><text x="366.80" y="703.6" text-anchor="middle" class="sc">-60</text><text x="382.72" y="703.6" text-anchor="middle" class="sc">-55</text><text x="398.63" y="703.6" text-anchor="middle" class="sc">-50</text><text x="414.55" y="703.6" text-anchor="middle" class="sc">-45</text><text x="430.47" y="703.6" text-anchor="middle" class="sc">-40</text><text x="446.38" y="703.6" text-anchor="middle" class="sc">-35</text><text x="462.30" y="703.6" text-anchor="middle" class="sc">-30</text><text x="478.22" y="703.6" text-anchor="middle" class="sc">-25</text><text x="494.13" y="703.6" text-anchor="middle" class="sc">-20</text><text x="510.05" y="703.6" text-anchor="middle" class="sc">-15</text><text x="525.97" y="703.6" text-anchor="middle" class="sc">-10</text><text x="541.88" y="703.6" text-anchor="middle" class="sc">-5</text><text x="558" y="703.6" text-anchor="end" class="sc">0</text><rect x="362" y="716" width="124" height="4" rx="2" fill="#2a82da"/><rect x="481.7" y="713.6" width="18.6" height="8.6" rx="2.5" fill="#d2d2d2"/><path d="M506.80 714.10 L511.50 714.10 L518.20 709.80 L518.20 726.10 L511.50 721.80 L506.80 721.80 Z" fill="#d4d4d4"/><path d="M520.80 714.00 Q525.20 717.95 520.80 722.00" stroke="#d4d4d4" stroke-width="1.95" fill="none"/><path d="M524.40 710.30 Q533.00 717.95 524.40 725.70" stroke="#d4d4d4" stroke-width="1.95" fill="none"/><path d="M545.52 712.49 L546.31 710.13 L547.69 710.13 L548.48 712.49 L549.85 713.06 L552.08 711.95 L553.05 712.92 L551.94 715.15 L552.51 716.52 L554.87 717.31 L554.87 718.69 L552.51 719.48 L551.94 720.85 L553.05 723.08 L552.08 724.05 L549.85 722.94 L548.48 723.51 L547.69 725.87 L546.31 725.87 L545.52 723.51 L544.15 722.94 L541.92 724.05 L540.95 723.08 L542.06 720.85 L541.49 719.48 L539.13 718.69 L539.13 717.31 L541.49 716.52 L542.06 715.15 L540.95 712.92 L541.92 711.95 L544.15 713.06 Z M543.70 718.00 a3.30 3.30 0 1 0 6.60 0 a3.30 3.30 0 1 0 -6.60 0 Z" fill="#d4d4d4" fill-rule="evenodd" stroke="#d4d4d4" stroke-width="0.5" stroke-linejoin="round"/>
<rect x="564.4" y="560" width="9.6" height="172" rx="4.8" fill="#4a4a4a"/>
</g>
<rect x="662" y="593" width="63.5" height="21.5" rx="3" fill="#1f1f1f"/>
<path d="M725.2 593 h12.6 a3 3 0 0 1 3 3 v8 h-15.6 Z" fill="#4c4c4c"/>
<path d="M725.2 605.2 h15.6 v6.3 a3 3 0 0 1 -3 3 h-12.6 Z" fill="#4c4c4c"/>
<path d="M728.10 602.00 L733.00 597.60 L737.90 602.00" stroke="#cecece" stroke-width="1.5" fill="none"/>
<path d="M728.10 607.60 L733.00 612.20 L737.90 607.60" stroke="#cecece" stroke-width="1.5" fill="none"/>
<circle cx="563" cy="747.8" r="3.9" fill="#7a7a7a"/>
<path d="M559.33 742.66 A6.40 6.40 0 0 0 559.33 753.14 M566.67 742.66 A6.40 6.40 0 0 1 566.67 753.14 M556.16 741.74 A9.20 9.20 0 0 0 556.16 754.06 M569.84 741.74 A9.20 9.20 0 0 1 569.84 754.06" stroke="#7c7c7c" stroke-width="1.6" fill="none"/>
<circle cx="666.7" cy="748" r="5" fill="#7e7e7e"/>
</svg>
<div id="menu" class="abs">
  <div class="sep" style="top:27px"></div>
  <div class="sep" style="top:102px"></div>
  <div class="sep" style="top:155px"></div>
  <div class="sep" style="top:186px"></div>
</div>
<svg id="hl" class="abs" width="991" height="790" viewBox="0 0 991 790">
  <defs><filter id="hb" x="-10%" y="-10%" width="120%" height="120%"><feGaussianBlur stdDeviation="2.3"/></filter></defs>
  <rect x="544.75" y="332.45" width="231.9" height="261.5" rx="9.65" fill="none" stroke="#000" stroke-opacity="0.5" stroke-width="8" filter="url(#hb)"/>
  <rect x="544.75" y="332.45" width="231.9" height="261.5" rx="9.65" fill="none" stroke="#ff0000" stroke-width="4.7"/>
</svg>

</body></html>
